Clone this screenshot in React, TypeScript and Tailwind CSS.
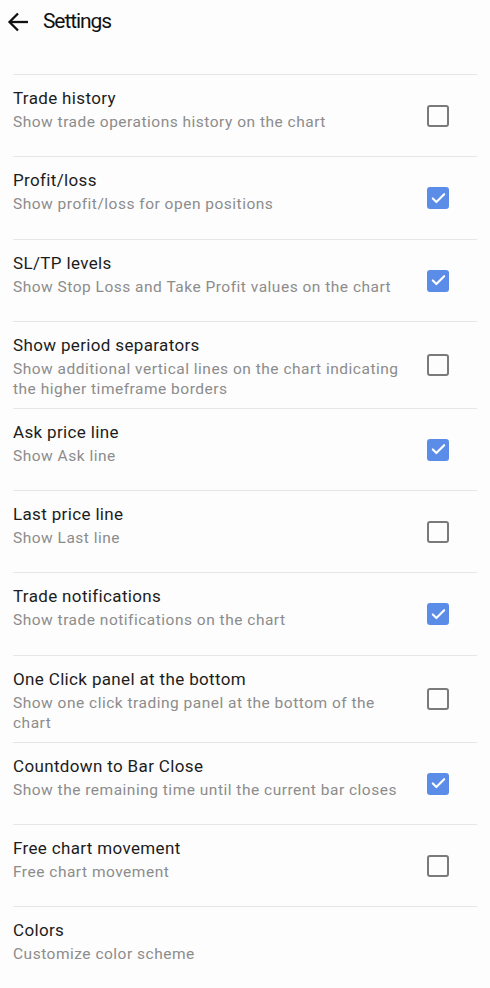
import { Check } from "lucide-react";

interface SettingItem {
  title: string;
  subtitle: string;
  checked?: boolean;
}

const items: SettingItem[] = [
  { title: "Trade history", subtitle: "Show trade operations history on the chart", checked: false },
  { title: "Profit/loss", subtitle: "Show profit/loss for open positions", checked: true },
  { title: "SL/TP levels", subtitle: "Show Stop Loss and Take Profit values on the chart", checked: true },
  {
    title: "Show period separators",
    subtitle: "Show additional vertical lines on the chart indicating the higher timeframe borders",
    checked: false,
  },
  { title: "Ask price line", subtitle: "Show Ask line", checked: true },
  { title: "Last price line", subtitle: "Show Last line", checked: false },
  { title: "Trade notifications", subtitle: "Show trade notifications on the chart", checked: true },
  {
    title: "One Click panel at the bottom",
    subtitle: "Show one click trading panel at the bottom of the chart",
    checked: false,
  },
  {
    title: "Countdown to Bar Close",
    subtitle: "Show the remaining time until the current bar closes",
    checked: true,
  },
  { title: "Free chart movement", subtitle: "Free chart movement", checked: false },
  { title: "Colors", subtitle: "Customize color scheme" },
];

function Checkbox({ checked }: { checked: boolean }) {
  if (checked) {
    return (
      <div className="flex h-[22px] w-[22px] items-center justify-center rounded-[3px] bg-[#5b8de8]">
        <Check className="h-[17px] w-[17px] text-white" strokeWidth={3} />
      </div>
    );
  }
  return <div className="h-[22px] w-[22px] rounded-[3px] border-2 border-[#7a7a7a]" />;
}

function SettingRow({ item }: { item: SettingItem }) {
  return (
    <div className="flex min-h-[82.25px] items-center border-t border-[#e6e6e6]">
      <div className="w-[400px] self-start pt-[11px] pb-[9px]">
        <p className="text-[17px] leading-[24px] tracking-[0.35px] text-[#1c1c1c]">{item.title}</p>
        <p className="mt-[2px] text-[15.5px] leading-[20px] tracking-[0.5px] text-[#8c8c8c]">
          {item.subtitle}
        </p>
      </div>
      {item.checked !== undefined && (
        <div className="ml-auto mr-[28px] mt-[1px]">
          <Checkbox checked={item.checked} />
        </div>
      )}
    </div>
  );
}

export default function App() {
  return (
    <div className="min-h-[988px] w-[490px] bg-[#fdfdfd] font-['Roboto',sans-serif]">
      <div className="flex h-[44px] items-center pl-[7px]">
        <svg width="22" height="22" viewBox="0 0 22 22" fill="none" stroke="#111" strokeWidth="2.3">
          <path d="M21 11H3" />
          <path d="M11 2.5 2.5 11l8.5 8.5" />
        </svg>
        <h1 className="ml-[14px] text-[21px] tracking-[-1.1px] text-[#111]">Settings</h1>
      </div>
      <div className="mx-[13px] mt-[30px]">
        {items.map((item) => (
          <SettingRow key={item.title} item={item} />
        ))}
      </div>
    </div>
  );
}
